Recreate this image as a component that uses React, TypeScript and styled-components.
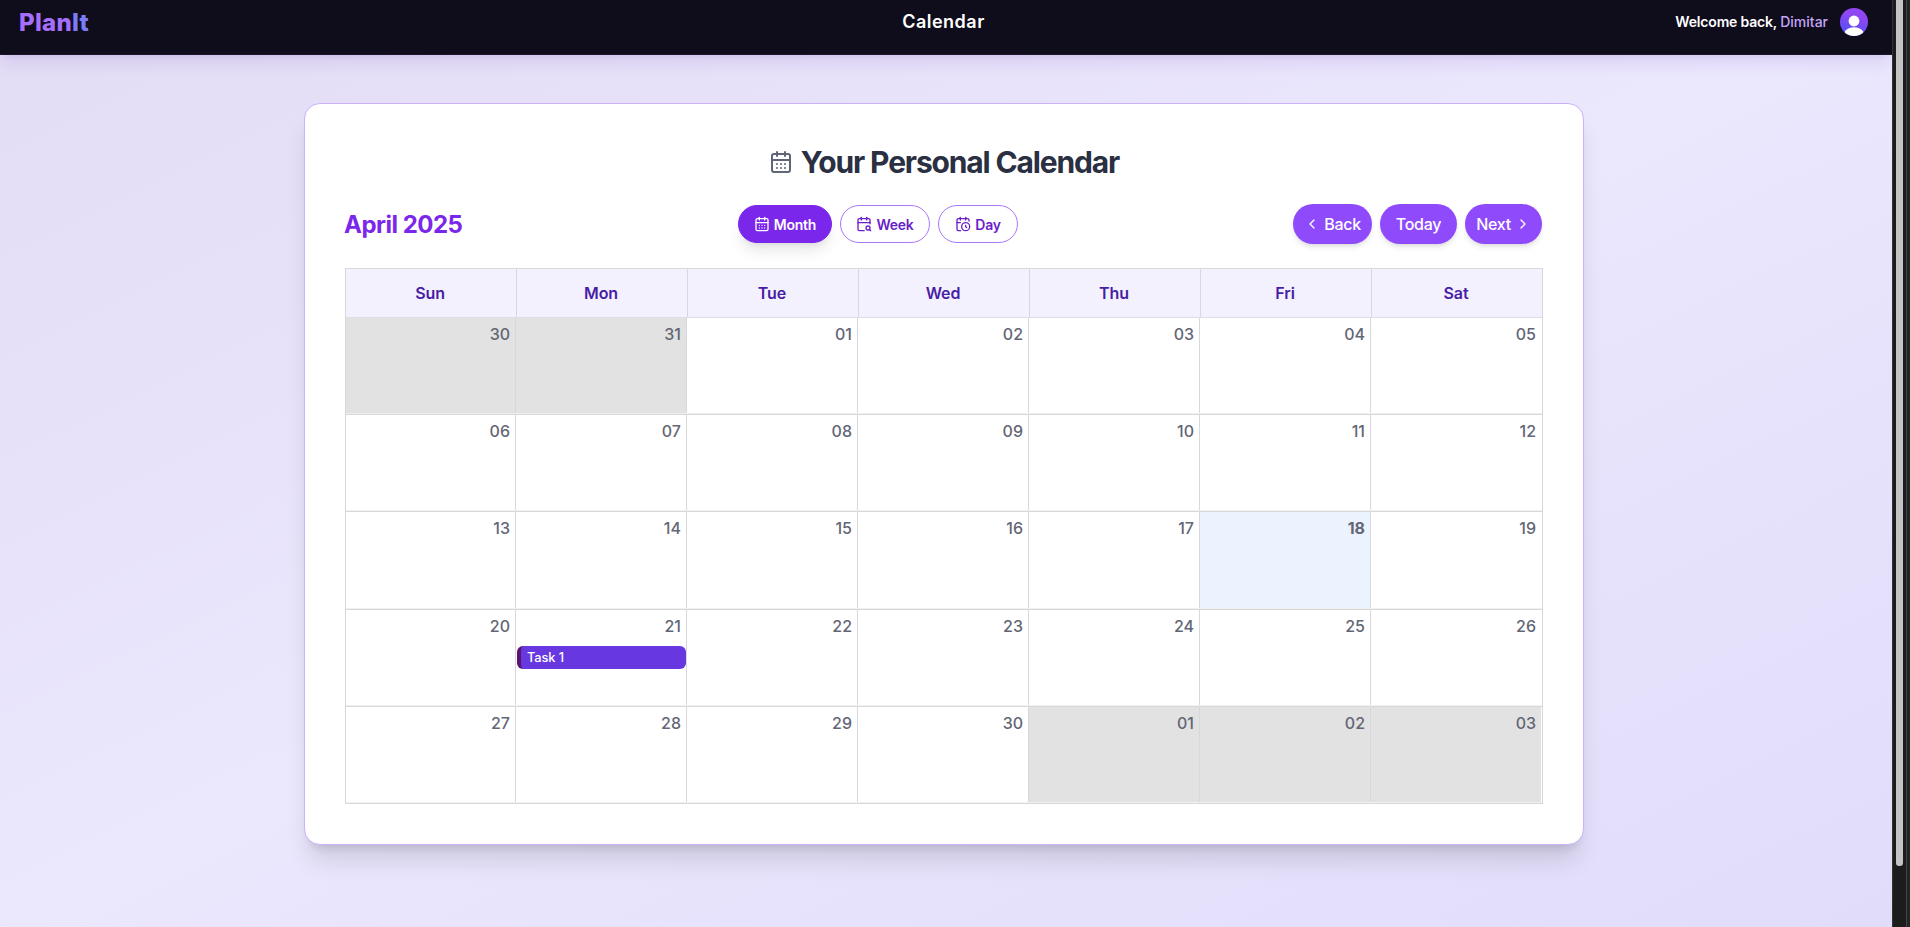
import React from "react";
import styled, { createGlobalStyle } from "styled-components";
import { CalendarDays, CalendarSearch, CalendarClock, ChevronLeft, ChevronRight } from "lucide-react";

const Global = createGlobalStyle`
  * { box-sizing: border-box; }
  body { margin: 0; background: #1c1c1c; font-family: Inter, "Liberation Sans", sans-serif; overflow: hidden; }
  button { font-family: inherit; cursor: pointer; }
`;
const Window = styled.div`
  display: flex;
  height: 927px;
`;
const Page = styled.div`
  width: 1892px;
  flex: none;
  display: flex;
  flex-direction: column;
  background: linear-gradient(to bottom right, #e2dcf5 0%, #ebe7fd 50%, #e1dcfa 100%);
`;
const Header = styled.header`
  height: 55px;
  flex: none;
  display: grid;
  grid-template-columns: 1fr auto 1fr;
  align-items: center;
  padding: 0 24px 11px 19px;
  background: #0f0c1b;
  border-bottom: 1px solid #1c1829;
  box-shadow: 0 10px 15px -3px rgba(110, 50, 180, 0.12), 0 4px 6px -4px rgba(110, 50, 180, 0.12);
`;
const Logo = styled.div`
  padding-top: 2px;
  font-size: 24px;
  font-weight: 800;
  line-height: 32px;
  letter-spacing: 0.3px;
  color: #a66efc;
  span { color: #7c7cf8; }
`;
const PageName = styled.div`
  font-size: 18px;
  font-weight: 600;
  letter-spacing: 0.5px;
  color: #fff;
`;
const User = styled.div`
  display: flex;
  justify-content: flex-end;
  align-items: center;
  gap: 12px;
  font-size: 14px;
  font-weight: 600;
  letter-spacing: -0.18px;
  color: #fff;
  span { color: #c4a5fa; font-weight: 500; letter-spacing: 0; }
`;
const Main = styled.main`
  padding: 48px 0 0 304px;
`;
const Card = styled.section`
  width: 1280px;
  height: 742px;
  padding: 40px;
  background: #fff;
  border: 1px solid #cbb0fb;
  border-radius: 16px;
  box-shadow: 0 20px 25px -5px rgba(0, 0, 0, 0.12), 0 8px 10px -6px rgba(0, 0, 0, 0.12);
`;
const Title = styled.h1`
  display: flex;
  justify-content: center;
  align-items: center;
  gap: 8px;
  height: 36px;
  margin: 0 0 24px;
  font-size: 30px;
  font-weight: 650;
  letter-spacing: -1.15px;
  color: #2a3042;
  svg { color: #5f6678; }
`;
const Toolbar = styled.div`
  display: flex;
  justify-content: space-between;
  align-items: center;
  height: 40px;
  margin-bottom: 24px;
  padding-right: 1px;
`;
const Month = styled.h2`
  margin: 0 1px 0 -1px;
  width: 118px;
  white-space: nowrap;
  font-size: 24px;
  font-weight: 700;
  letter-spacing: -0.5px;
  color: #7a26eb;
`;
const Group = styled.div`
  display: flex;
  gap: 8px;
`;
const ViewButton = styled.button<{ $active?: boolean; $w: number }>`
  display: flex;
  align-items: center;
  justify-content: center;
  gap: 4px;
  width: ${(p) => p.$w}px;
  height: 38px;
  padding: 0;
  border: 1px solid ${(p) => (p.$active ? "#7a26eb" : "#a878f8")};
  border-radius: 19px;
  background: ${(p) => (p.$active ? "#7a26eb" : "#fff")};
  color: ${(p) => (p.$active ? "#fff" : "#6a1fcb")};
  font-size: 14px;
  font-weight: 600;
  letter-spacing: -0.25px;
  box-shadow: ${(p) => (p.$active ? "0 10px 15px -3px rgba(0,0,0,.1), 0 4px 6px -4px rgba(0,0,0,.1)" : "none")};
`;
const NavButton = styled.button<{ $w: number }>`
  display: flex;
  align-items: center;
  justify-content: center;
  gap: 4px;
  width: ${(p) => p.$w}px;
  height: 40px;
  padding: 0;
  border: 0;
  border-radius: 20px;
  background: #8f4afc;
  color: #fff;
  font-size: 16px;
  font-weight: 550;
  letter-spacing: -0.3px;
  box-shadow: 0 4px 6px -1px rgba(0, 0, 0, 0.1), 0 2px 4px -2px rgba(0, 0, 0, 0.1);
`;
const Table = styled.div`
  width: 1198px;
  height: 536px;
  border: 1px solid #d8d8da;
`;
const Weekdays = styled.div`
  display: grid;
  grid-template-columns: 170px repeat(6, 171px);
  height: 49px;
  background: #f4f1ff;
  border-bottom: 1px solid #dedce4;
`;
const Weekday = styled.div`
  display: flex;
  align-items: center;
  justify-content: center;
  padding-right: 2px;
  font-size: 16px;
  font-weight: 600;
  letter-spacing: -0.1px;
  color: #481da5;
  & + & { border-left: 1px solid #d8d8da; }
`;
const Week = styled.div<{ $h: number }>`
  display: grid;
  grid-template-columns: 169px repeat(6, 171px);
  height: ${(p) => p.$h}px;
  padding-bottom: 1px;
  & + & { border-top: 1px solid #d8d8da; }
  background: linear-gradient(#fff, #fff) 0 0 / 100% calc(100% - 1px) no-repeat, #f0f0f0;
`;
const Day = styled.div<{ $off?: boolean; $today?: boolean }>`
  padding: 4px 5px 0 0;
  background: ${(p) => (p.$off ? "#e2e2e2" : p.$today ? "#ebf3fe" : "#fff")};
  & + & { border-left: 1px solid #d8d8da; }
`;
const Num = styled.div<{ $bold?: boolean }>`
  height: 24px;
  text-align: right;
  line-height: 24px;
  font-size: 16px;
  font-weight: ${(p) => (p.$bold ? 750 : 550)};
  color: #636675;
`;
const Event = styled.div`
  height: 23px;
  margin: 8px -5px 0 1px;
  padding-left: 6px;
  border-left: 4px solid #5b1370;
  border-radius: 6px;
  background: #6737e0;
  color: #fff;
  font-size: 12.8px;
  font-weight: 500;
  letter-spacing: -0.1px;
  line-height: 23px;
`;
const Scrollbar = styled.div`
  flex: 1;
  display: flex;
  height: 927px;
  padding-left: 3px;
  background: #1c1c1c;
  border-left: 1px solid #333;
`;
const Thumb = styled.div`
  width: 7px;
  height: 866px;
  border-radius: 0 0 3px 3px;
  background: #c4c4c4;
`;
const Edge = styled.div`
  width: 4px;
  margin-left: auto;
  border-left: 1px solid #454545;
  background: #242422;
`;

const weekdays = ["Sun", "Mon", "Tue", "Wed", "Thu", "Fri", "Sat"];
const weeks = [
  { height: 96, days: ["30", "31", "01", "02", "03", "04", "05"] },
  { height: 97, days: ["06", "07", "08", "09", "10", "11", "12"] },
  { height: 98, days: ["13", "14", "15", "16", "17", "18", "19"] },
  { height: 97, days: ["20", "21", "22", "23", "24", "25", "26"] },
  { height: 97, days: ["27", "28", "29", "30", "01", "02", "03"] },
];

const Avatar = () => (
  <svg width="28" height="28" viewBox="0 0 28 28">
    <defs>
      <linearGradient id="avatar" x1="0.6" y1="0" x2="0.3" y2="1">
        <stop offset="0.25" stopColor="#9146f3" />
        <stop offset="1" stopColor="#4b52f5" />
      </linearGradient>
      <clipPath id="disc"><circle cx="14" cy="14" r="14" /></clipPath>
    </defs>
    <g clipPath="url(#disc)">
      <rect width="28" height="28" fill="url(#avatar)" />
      <circle cx="14" cy="13" r="5.4" fill="#fff" />
      <ellipse cx="14" cy="26" rx="10" ry="6.7" fill="#fff" />
    </g>
  </svg>
);

export default function App() {
  return (
    <>
      <Global />
      <Window>
        <Page>
          <Header>
            <Logo>Plan<span>It</span></Logo>
            <PageName>Calendar</PageName>
            <User>
              <div>Welcome back, <span>Dimitar</span></div>
              <Avatar />
            </User>
          </Header>
          <Main>
            <Card>
              <Title><CalendarDays size={24} strokeWidth={2} />Your Personal Calendar</Title>
              <Toolbar>
                <Month>April 2025</Month>
                <Group>
                  <ViewButton $active $w={94}><CalendarDays size={16} />Month</ViewButton>
                  <ViewButton $w={90}><CalendarSearch size={16} />Week</ViewButton>
                  <ViewButton $w={80}><CalendarClock size={16} />Day</ViewButton>
                </Group>
                <Group>
                  <NavButton $w={79}><ChevronLeft size={16} />Back</NavButton>
                  <NavButton $w={77}>Today</NavButton>
                  <NavButton $w={77}>Next<ChevronRight size={16} /></NavButton>
                </Group>
              </Toolbar>
              <Table>
                <Weekdays>
                  {weekdays.map((d) => <Weekday key={d}>{d}</Weekday>)}
                </Weekdays>
                {weeks.map((week, w) => (
                  <Week key={w} $h={week.height}>
                    {week.days.map((d, i) => {
                      const today = w === 2 && i === 5;
                      return (
                        <Day key={i} $off={(w === 0 && i < 2) || (w === 4 && i > 3)} $today={today}>
                          <Num $bold={today}>{d}</Num>
                          {w === 3 && i === 1 && <Event>Task 1</Event>}
                        </Day>
                      );
                    })}
                  </Week>
                ))}
              </Table>
            </Card>
          </Main>
        </Page>
        <Scrollbar><Thumb /><Edge /></Scrollbar>
      </Window>
    </>
  );
}
